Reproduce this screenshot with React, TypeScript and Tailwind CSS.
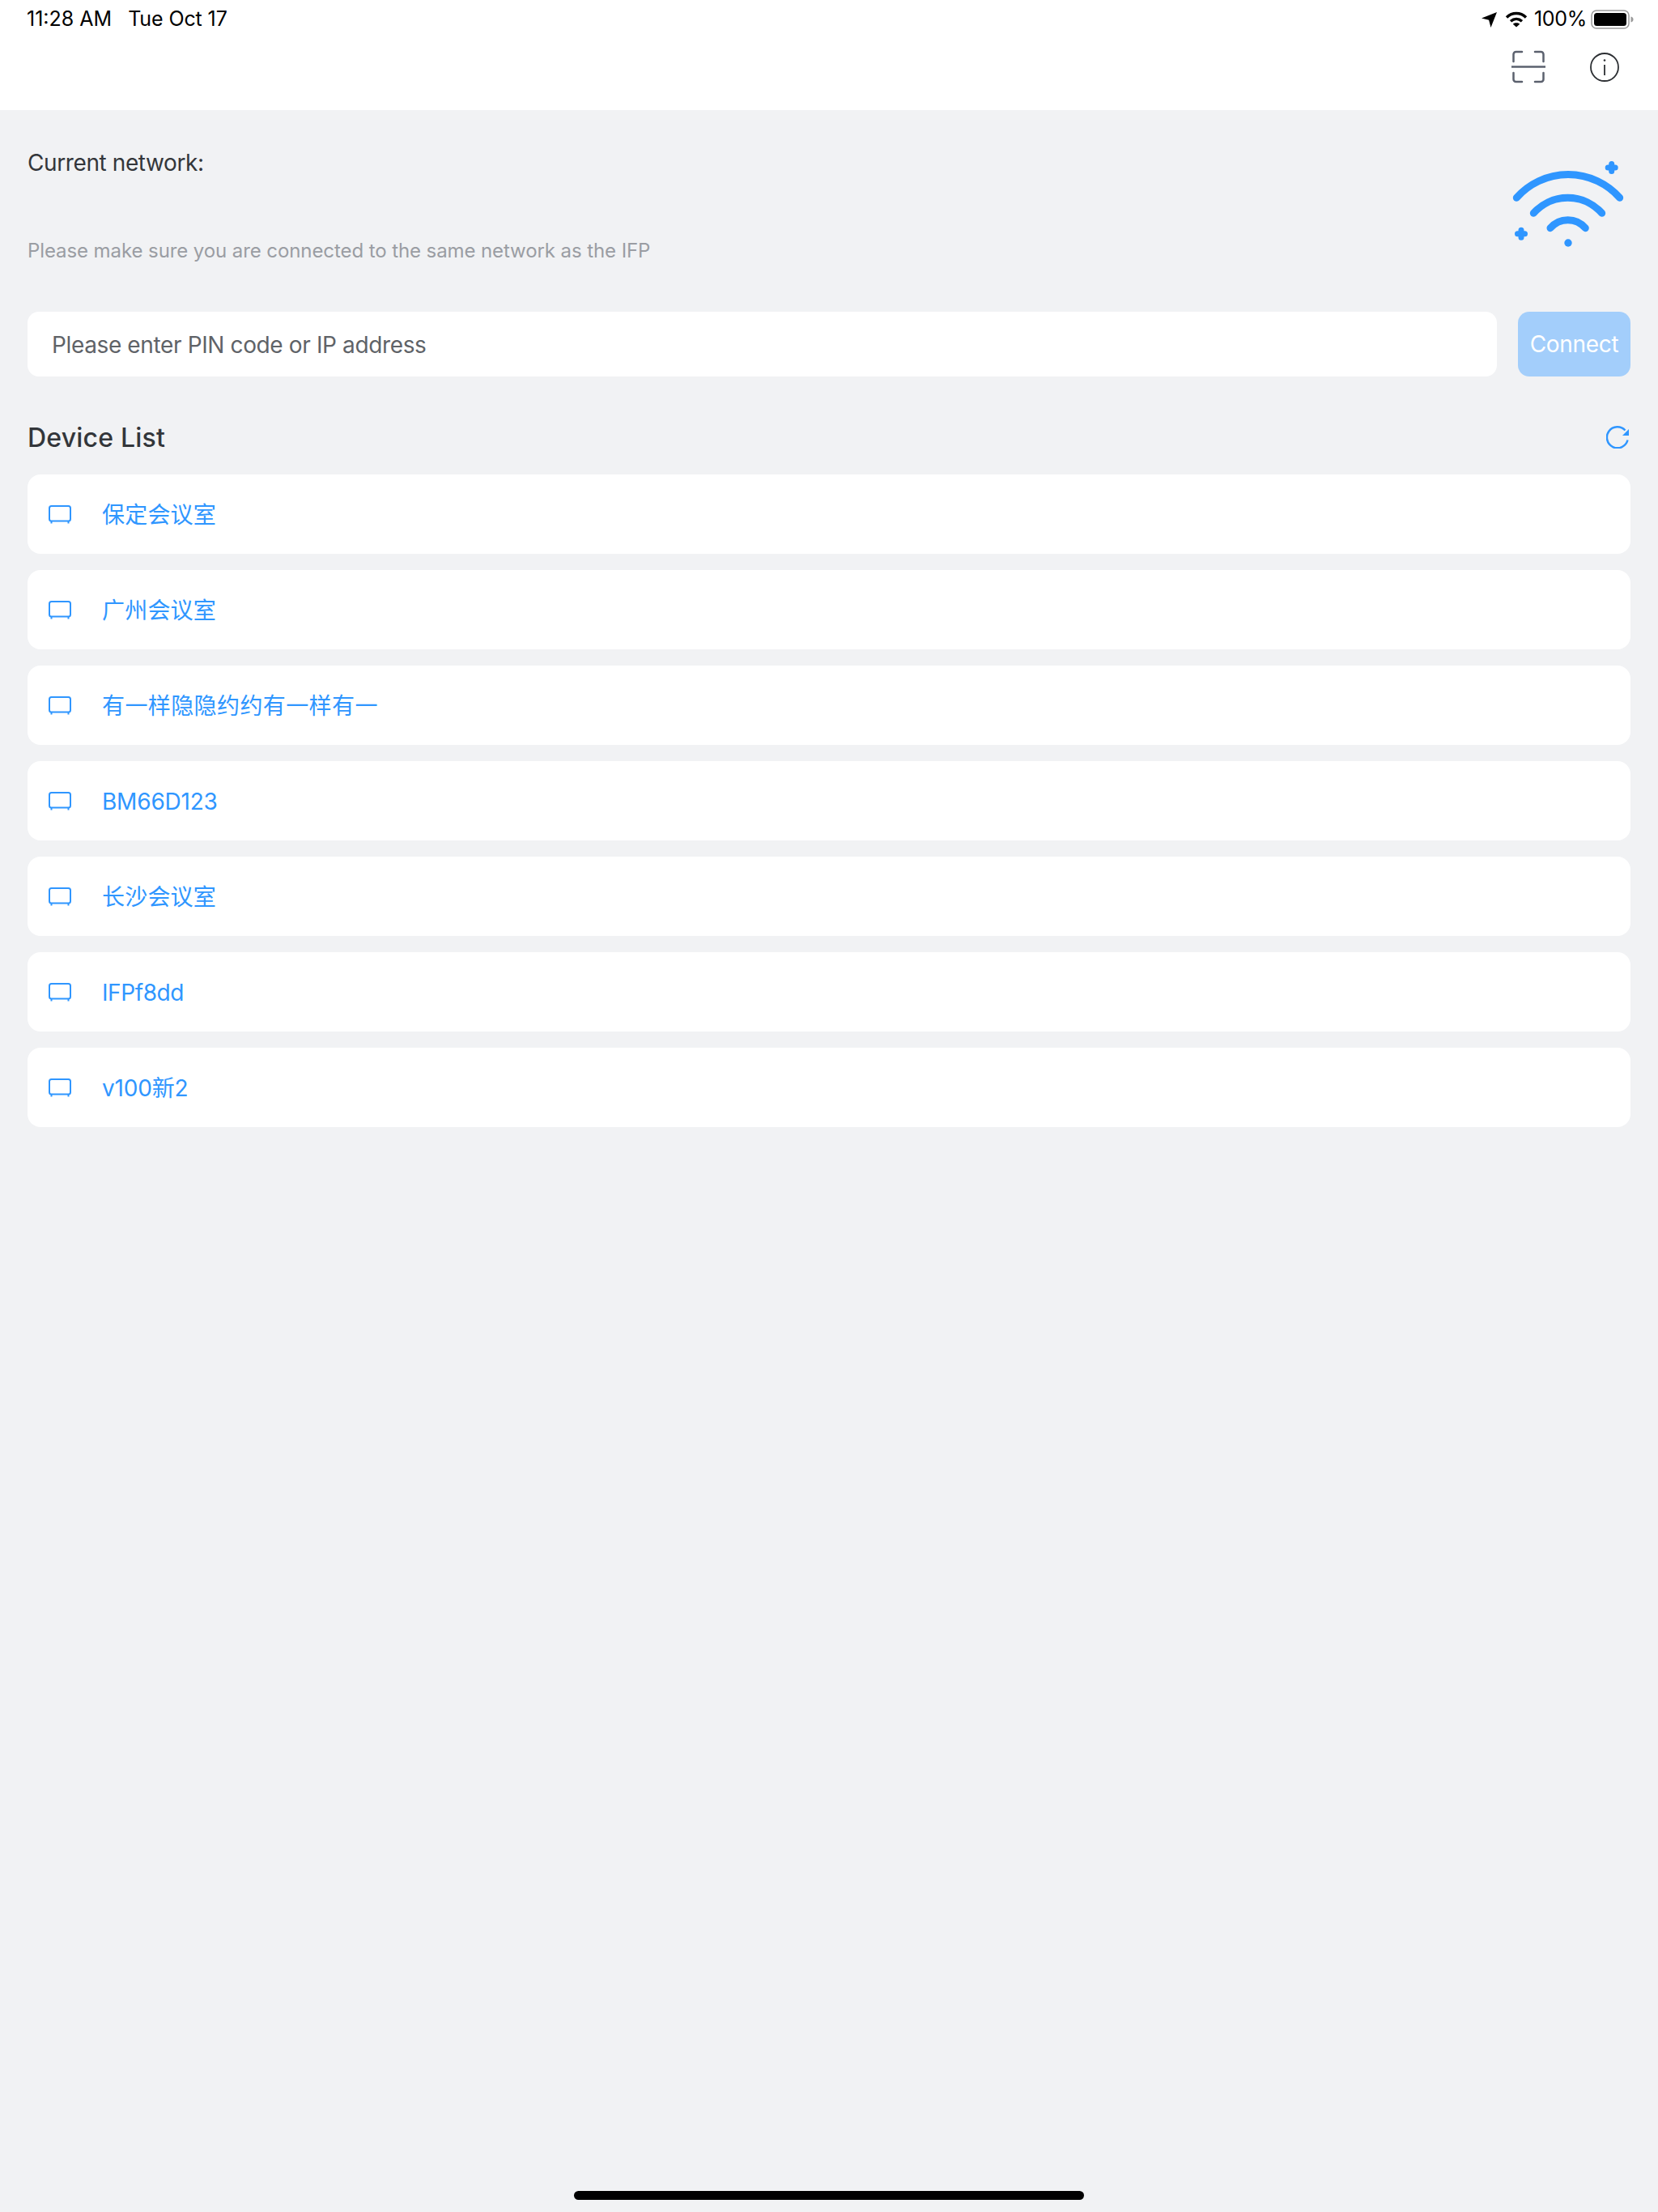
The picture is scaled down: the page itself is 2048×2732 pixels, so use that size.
// cjk names run a little wider than latin ones in the reference, hence the per-row tracking
const devices = [
  { name: '保定会议室', tracking: 'tracking-[0.2px]' },
  { name: '广州会议室', tracking: 'tracking-[0.2px]' },
  { name: '有一样隐隐约约有一样有一', tracking: 'tracking-[0.4px]' },
  { name: 'BM66D123', tracking: 'tracking-[-0.2px]' },
  { name: '长沙会议室', tracking: 'tracking-[0.2px]' },
  { name: 'IFPf8dd', tracking: 'tracking-[-0.4px]' },
  { name: 'v100新2', tracking: 'tracking-[-0.2px]' },
]

function ScreenIcon() {
  return (
    <svg width="28" height="23" viewBox="0 0 28 23" fill="none" className="shrink-0">
      <rect x="1" y="1" width="26" height="18.5" rx="2.5" stroke="#2f96ff" strokeWidth="2" />
      <path d="M3.5 19.5v3M24.5 19.5v3" stroke="#2f96ff" strokeWidth="2" />
    </svg>
  )
}

function StatusBar() {
  return (
    <div className="flex h-[48px] items-center pl-[33px] pr-[30px] text-[25px] text-black">
      <span>11:28 AM</span>
      <span className="ml-[20px] tracking-[-0.1px]">Tue Oct 17</span>
      <div className="ml-auto flex items-center">
        <svg width="19" height="19" viewBox="0 0 19 19">
          <path d="M19 0 11.5 19l-2.4-9.2L0 7.6z" fill="#000" />
        </svg>
        <svg width="28" height="20" viewBox="0 0 28 20" fill="none" stroke="#000" className="ml-[10px]">
          <path d="M2 7.5c7-6.6 17-6.6 24 0" strokeWidth="3.4" />
          <path d="M7 12.2c4.300-3.800 9.700-3.800 14 0" strokeWidth="3.4" />
          <path d="M14 19.500 9.800 15.700c2.500-1.900 5.900-1.900 8.400 0z" fill="#000" stroke="none" />
        </svg>
        <span className="ml-[8px] tracking-[-0.3px]">100%</span>
        <svg width="53" height="24" viewBox="0 0 53 24" fill="none" className="ml-[5px]">
          <rect x="1" y="1" width="46" height="22" rx="6" stroke="#9a9a9a" strokeWidth="1.500" />
          <rect x="4" y="4" width="40" height="16" rx="3.500" fill="#000" />
          <path d="M49.500 8.500c2 .5 3 1.800 3 3.500s-1 3-3 3.500z" fill="#9a9a9a" />
        </svg>
      </div>
    </div>
  )
}

function ScanIcon() {
  return (
    <svg width="42" height="41" viewBox="0 0 42 41" fill="none" stroke="#5b616e" strokeWidth="2.500">
      <path d="M13 2H5.500A3 3 0 0 0 2.500 5v9M29 2h7.500a3 3 0 0 1 3 3v9M13 39H5.500a3 3 0 0 1-3-3v-8M29 39h7.500a3 3 0 0 0 3-3v-8" strokeLinecap="round" />
      <path d="M0 20.500h42" />
    </svg>
  )
}

function InfoIcon() {
  return (
    <svg width="36" height="36" viewBox="0 0 36 36" fill="none" stroke="#2c2f33" strokeWidth="1.800" className="ml-[55px]">
      <circle cx="18" cy="18" r="17" />
      <path d="M18 15v13" />
      <circle cx="18" cy="9.500" r="1.300" fill="#2c2f33" stroke="none" />
    </svg>
  )
}

function WifiArt() {
  return (
    <svg width="149" height="115" viewBox="0 0 149 115" fill="none" stroke="#2f96ff" strokeWidth="9" strokeLinecap="round" className="shrink-0">
      <path d="M8.300 49.300A85 85 0 0 1 135.700 49.300" />
      <path d="M29.300 68.300A56.400 56.400 0 0 1 113.700 68.300" />
      <path d="M50 86.700A28.400 28.400 0 0 1 93.300 86.700" />
      <circle cx="72" cy="105" r="4.700" fill="#2f96ff" stroke="none" />
      <path d="M125.700 7.500v9M121.200 12h9M14 89.200v9M9.500 93.700h9" strokeWidth="7" />
    </svg>
  )
}

function RefreshIcon() {
  return (
    <svg width="28" height="28" viewBox="0 0 28 28" fill="none" className="mr-[2px]">
      <path d="M23.500 5.500A13 13 0 1 0 26.500 17.500" stroke="#2f96ff" strokeWidth="2.500" />
      <path d="M28 4v8h-8z" fill="#2f96ff" />
    </svg>
  )
}

export default function App() {
  return (
    <div className="flex h-[2732px] w-[2048px] flex-col overflow-hidden bg-[#f1f2f4] font-['Inter','Noto_Sans_CJK_SC',sans-serif]">
      <header className="h-[136px] shrink-0 bg-white">
        <StatusBar />
        <div className="flex items-center justify-end pr-[48px] pt-[14px]">
          <ScanIcon />
          <InfoIcon />
        </div>
      </header>

      <main className="px-[34px]">
        <div className="mb-[58px] flex items-start justify-between">
          <div className="pt-[45px]">
            <p className="h-[40px] text-[28px] leading-[40px] tracking-[-0.4px] text-[#33363a]">Current network:</p>
            <p className="mt-[72px] h-[34px] text-[24px] leading-[34px] tracking-[-0.09px] text-[#9a9da3]">
              Please make sure you are connected to the same network as the IFP
            </p>
          </div>
          <div className="pt-[59px]">
            <WifiArt />
          </div>
        </div>

        <div className="flex gap-[26px]">
          <input
            readOnly
            placeholder="Please enter PIN code or IP address"
            className="h-[80px] min-w-0 flex-1 rounded-[14px] bg-white px-[30px] pt-[2px] text-[28px] tracking-[-0.37px] outline-none placeholder:text-[#5f6368]"
          />
          <button type="button" className="h-[80px] w-[139px] rounded-[14px] bg-[#a3cefb] text-[28px] tracking-[-0.3px] text-white">
            Connect
          </button>
        </div>

        <div className="mt-[55px] flex h-[40px] items-center justify-between">
          <h2 className="pt-[2px] text-[32px] leading-[40px] font-medium tracking-[0.2px] text-[#33363a]">Device List</h2>
          <RefreshIcon />
        </div>

        <div className="mt-[26px] flex flex-col gap-[20px]">
          {devices.map((device) => (
            <div key={device.name} className="flex h-[98px] items-center rounded-[16px] bg-white pl-[26px] text-[28px] text-[#2f96ff]">
              <ScreenIcon />
              <span className={`ml-[38px] mt-[2px] ${device.tracking}`}>{device.name}</span>
            </div>
          ))}
        </div>
      </main>

      <div className="mt-auto flex justify-center pb-[15px]">
        <div className="h-[11px] w-[630px] rounded-full bg-black" />
      </div>
    </div>
  )
}
